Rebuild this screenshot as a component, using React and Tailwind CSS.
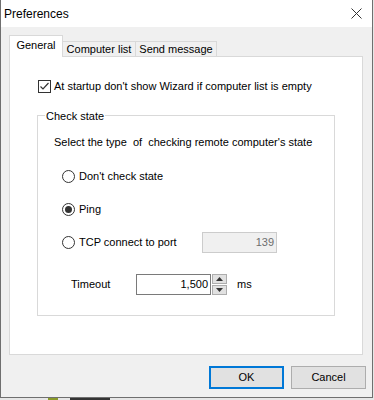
import React from "react";

const FONT = "font-['Liberation_Sans',Arial,sans-serif]";

function Radio({ checked, label }) {
  return (
    <div className="flex items-center gap-[4px]">
      <svg width="13" height="13" viewBox="0 0 13 13" className="shrink-0">
        <circle cx="6.5" cy="6.5" r="6" fill="#fff" stroke="#333" strokeWidth="1" />
        {checked && <circle cx="6.5" cy="6.5" r="3.5" fill="#333" />}
      </svg>
      <span className="leading-[13px]">{label}</span>
    </div>
  );
}

function Arrow({ up }) {
  return (
    <svg width="7" height="4" viewBox="0 0 7 4">
      <path d={up ? "M0 4 L3.5 0 L7 4 Z" : "M0 0 L3.5 4 L7 0 Z"} fill="#333" />
    </svg>
  );
}

export default function App() {
  return (
    <div className={`w-[374px] h-[400px] overflow-hidden bg-[#e6e6e6] text-[11px] text-black ${FONT}`}>
      {/* ── WINDOW ─────────────────────────────────── */}
      <div className="flex h-[398px] w-[373px] flex-col border-x border-b border-[#6f6f6f]">
        <div className="flex h-[27px] items-center justify-between bg-white pl-[3px] pr-[10px]">
          <span className="text-[12px] leading-[14px]">Preferences</span>
          <svg width="11" height="11" viewBox="0 0 11 11">
            <path d="M0.5 0.5 L10.5 10.5 M10.5 0.5 L0.5 10.5" stroke="#333" strokeWidth="1" />
          </svg>
        </div>

        <div className="flex flex-1 flex-col bg-[#f0f0f0]">
          {/* tabs */}
          <div className="mt-[8px] flex h-[21px] items-end pl-[8px]">
            <div className="relative z-10 -mb-px flex h-[22px] w-[54px] justify-center border border-b-0 border-[#d9d9d9] bg-white pt-[3px] leading-[13px]">
              General
            </div>
            <div className="flex h-[15px] w-[73px] items-center justify-center border border-b-0 border-l-0 border-[#d9d9d9] pt-[1px] leading-[13px]">
              Computer list
            </div>
            <div className="flex h-[15px] w-[81px] items-center justify-center border border-b-0 border-l-0 border-[#d9d9d9] pt-[1px] leading-[13px]">
              Send message
            </div>
          </div>

          {/* panel */}
          <div className="ml-[8px] flex h-[299px] w-[354px] flex-col border border-[#d9d9d9] bg-white">
            <div className="ml-[28px] mt-[23px] flex h-[13px] items-center gap-[2px]">
              <svg width="14" height="13" viewBox="0 0 14 13" className="shrink-0">
                <rect x="0.5" y="0.5" width="12" height="12" fill="#fff" stroke="#333" />
                <path d="M2.5 6.5 L5 9 L10.5 3" fill="none" stroke="#333" strokeWidth="1.2" />
              </svg>
              <span className="leading-[13px]">At startup don't show Wizard if computer list is empty</span>
            </div>

            <div className="ml-[27px] mt-[22px] flex h-[201px] w-[298px] flex-col border border-[#d9d9d9]">
              <span className="-mt-[6px] ml-[7px] w-fit bg-white px-[1px] leading-[13px]">Check state</span>
              <span className="ml-[16px] mt-[13px] whitespace-pre leading-[13px]">
                Select the type  of  checking remote computer's state
              </span>

              <div className="ml-[24px] mt-[17px] flex h-[21px] items-center">
                <Radio label="Don't check state" />
              </div>
              <div className="ml-[24px] mt-[12px] flex h-[21px] items-center">
                <Radio checked label="Ping" />
              </div>
              <div className="ml-[24px] mt-[12px] flex h-[21px] items-center">
                <div className="w-[140px]">
                  <Radio label="TCP connect to port" />
                </div>
                <div className="flex h-[21px] w-[75px] items-center justify-end border border-[#cccccc] bg-[#f0f0f0] pr-[2px] text-[#6d6d6d]">
                  139
                </div>
              </div>

              <div className="ml-[33px] mt-[21px] flex h-[21px] items-center">
                <span className="w-[65px] leading-[13px]">Timeout</span>
                <div className="flex h-[21px] w-[75px] items-center justify-end border border-[#7a7a7a] bg-white pr-[2px]">
                  1,500
                </div>
                <div className="ml-px flex h-[21px] w-[15px] flex-col gap-px">
                  <div className="flex flex-1 items-center justify-center border border-[#adadad] bg-[#e1e1e1]">
                    <Arrow up />
                  </div>
                  <div className="flex flex-1 items-center justify-center border border-[#adadad] bg-[#e1e1e1]">
                    <Arrow />
                  </div>
                </div>
                <span className="ml-[10px] leading-[13px]">ms</span>
              </div>
            </div>
          </div>

          {/* buttons */}
          <div className="mt-[11px] flex justify-end gap-[7px] pr-[6px]">
            <div className="flex h-[23px] w-[75px] items-center justify-center border-2 border-[#0078d7] bg-[#e1e1e1]">
              OK
            </div>
            <div className="flex h-[23px] w-[75px] items-center justify-center border border-[#adadad] bg-[#e1e1e1]">
              Cancel
            </div>
          </div>
        </div>
      </div>
      <div className="flex h-[2px] gap-[12px] pl-[48px]">
        <div className="w-[10px] bg-[#8a9a2a]" />
        <div className="w-[40px] bg-[#333]" />
      </div>
    </div>
  );
}
